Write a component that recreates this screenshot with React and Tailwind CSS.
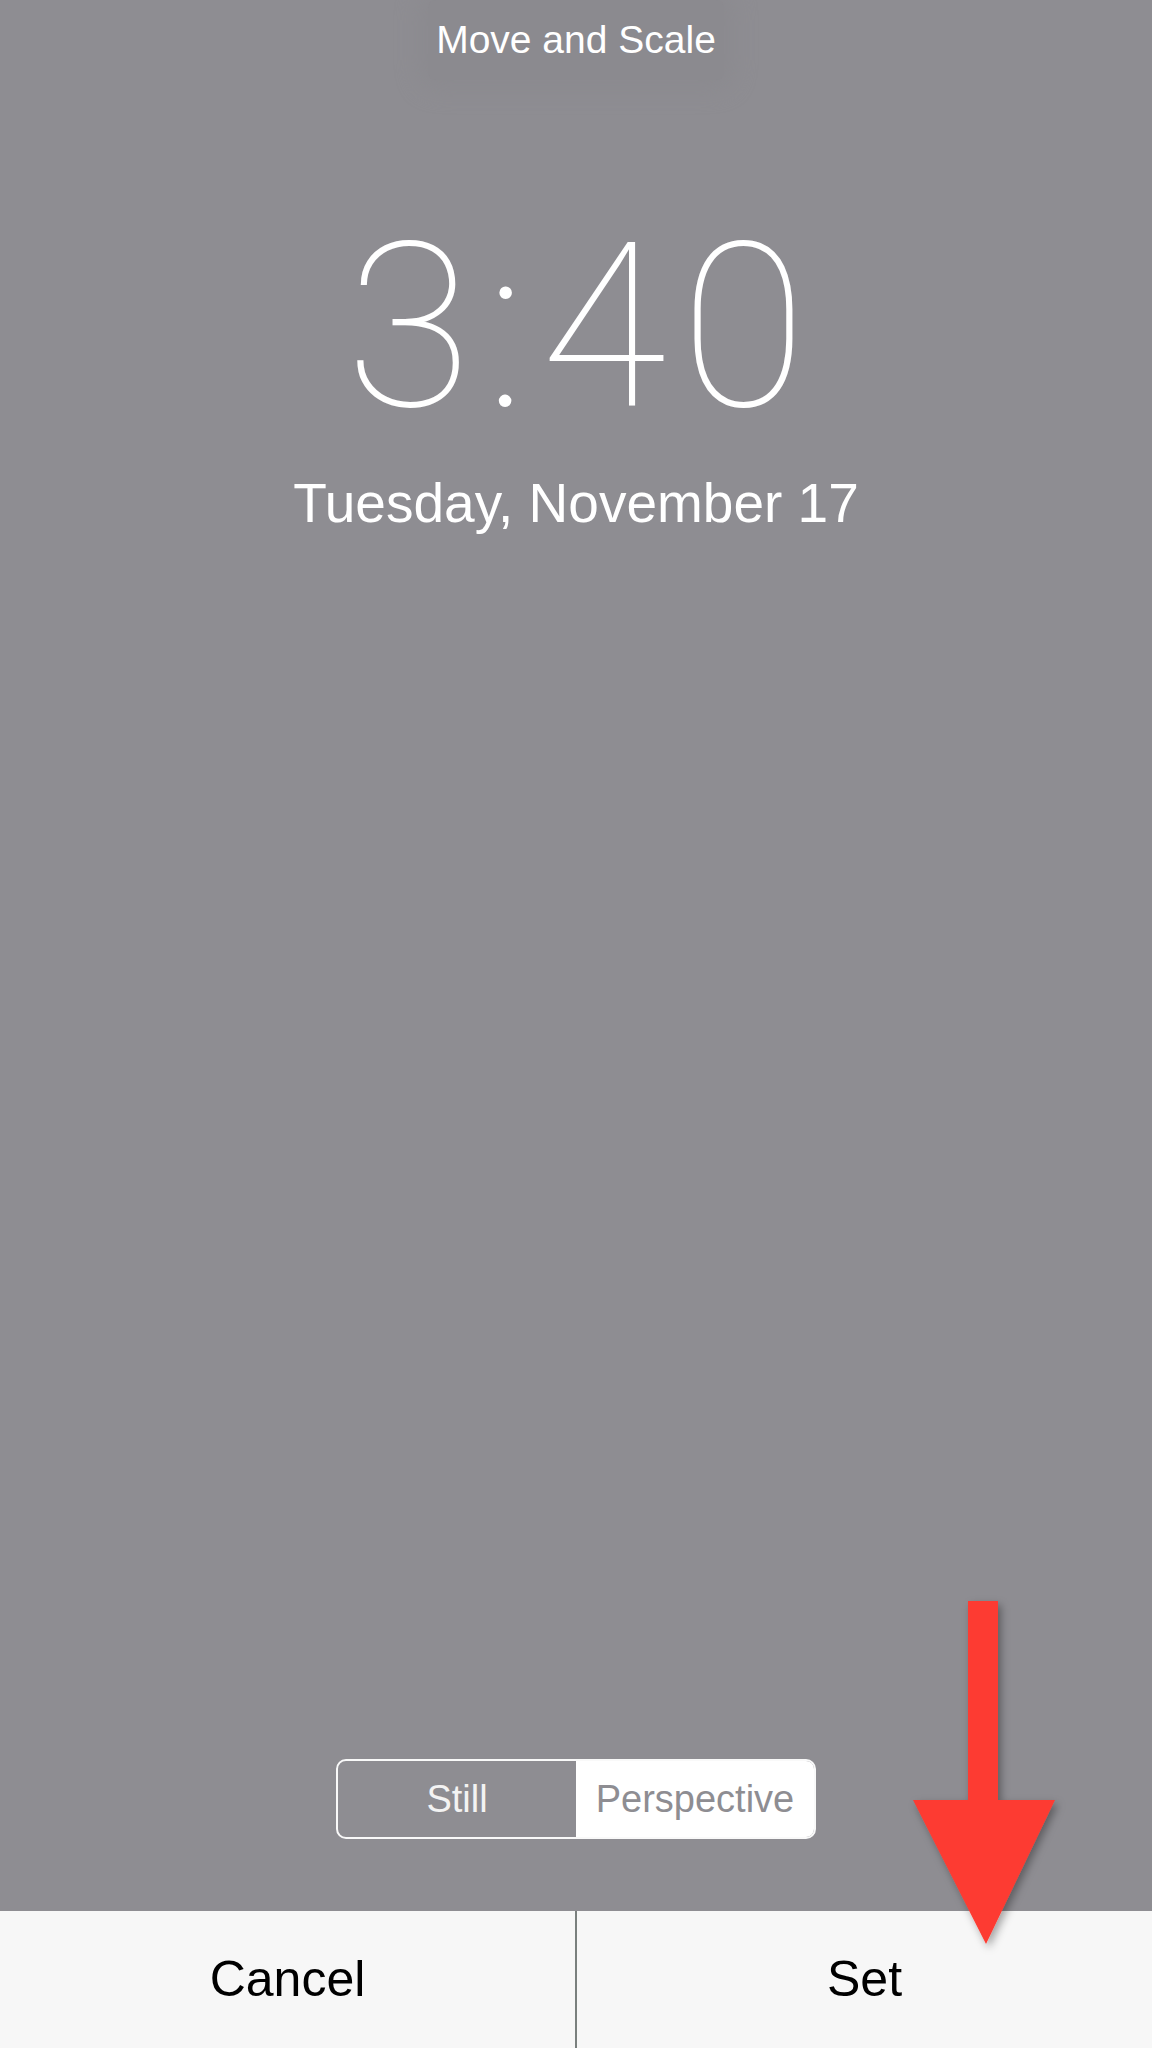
export default function App() {
  return (
    <div className="relative w-[1152px] h-[2048px] overflow-hidden bg-[#8e8d92] flex flex-col items-center font-['Liberation_Sans',Arial,sans-serif]">
      <div className="h-[80px] flex items-start justify-center">
        <span className="h-[80px] leading-[80px] px-2 text-[39px] text-white bg-[#8b8a8f] shadow-[0_0_24px_8px_#8b8a8f] rounded-lg">
          Move and Scale
        </span>
      </div>

      <div className="mt-[128px] ml-[14px] h-[240px] leading-[240px] text-[230px] font-thin text-white font-['Roboto',sans-serif] tracking-[14px]">
        3:40
      </div>

      <div className="mt-[25px] h-[60px] leading-[60px] text-[55px] text-white">
        Tuesday, November 17
      </div>

      <div className="flex-1" />

      <div className="mb-[72px] h-[80px] w-[480px] flex rounded-[10px] border-[2.5px] border-white/95 overflow-hidden">
        <div className="flex-1 flex items-center justify-center text-[38px] text-[#f3f3f3]">Still</div>
        <div className="flex-1 flex items-center justify-center bg-white text-[38px] text-[#8e8d92]">Perspective</div>
      </div>

      <div className="w-full h-[137px] flex bg-[#f7f7f7]">
        <button className="flex-1 flex items-center justify-center text-[50px] text-black">Cancel</button>
        <div className="w-[2px] bg-[#7a807e]" />
        <button className="flex-1 flex items-center justify-center text-[50px] text-black">Set</button>
      </div>

      {/* annotation arrow */}
      <svg
        className="absolute left-0 top-0 pointer-events-none"
        width="1152"
        height="2048"
        viewBox="0 0 1152 2048"
      >
        <defs>
          <filter id="arrowShadow" x="-20%" y="-10%" width="140%" height="130%">
            <feDropShadow dx="3" dy="4" stdDeviation="4" floodColor="#000" floodOpacity="0.35" />
          </filter>
        </defs>
        <polygon
          points="968,1601 998,1601 998,1800 1055,1800 986,1944 913,1800 968,1800"
          fill="#fd3b30"
          filter="url(#arrowShadow)"
        />
      </svg>
    </div>
  );
}
